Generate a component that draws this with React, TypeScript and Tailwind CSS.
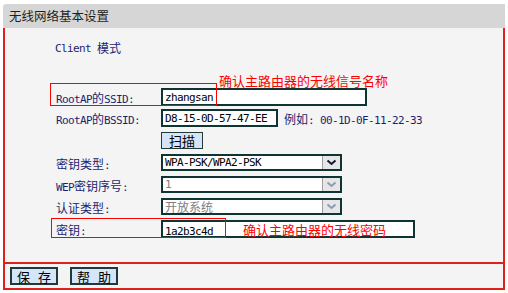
import { ReactNode } from 'react'

const cjkRe = /[\u3000-\u9fff\uff00-\uffef]/

// SimSun-style mix: latin runs in narrow mono, chinese runs in 12px
function Mix({ s }: { s: string }) {
  const parts = s.match(/[\u3000-\u9fff\uff00-\uffef]+|[^\u3000-\u9fff\uff00-\uffef]+/g) || []
  return (
    <>
      {parts.map((p, i) =>
        cjkRe.test(p) ? (
          <span key={i} className="font-['Noto_Sans_CJK_SC',sans-serif] text-[12px]">
            {p}
          </span>
        ) : (
          <span key={i} className="font-['DejaVu_Sans_Mono',monospace] text-[11px] tracking-[-0.62px] whitespace-pre">
            {p}
          </span>
        )
      )}
    </>
  )
}

function Row({ label, top, h = 'h-[18px]', children }: { label: string; top: string; h?: string; children?: ReactNode }) {
  return (
    <div className={`flex items-center ${top} ${h}`}>
      <div className="w-[156px] shrink-0 pl-[51px] text-[#1c1f6e] leading-none whitespace-nowrap">
        {label && <Mix s={label} />}
      </div>
      {children}
    </div>
  )
}

function Chevron({ disabled }: { disabled?: boolean }) {
  return (
    <div className="flex h-full w-[18px] shrink-0 items-center justify-center border-l border-[#a0a0a0] bg-[#e6e6e6]">
      <svg width="11" height="7" viewBox="0 0 11 7">
        <polyline
          points="1.5,1.5 5.5,5 9.5,1.5"
          fill="none"
          stroke={disabled ? '#8c9bb0' : '#111a33'}
          strokeWidth="2"
        />
      </svg>
    </div>
  )
}

function Select({ value, disabled }: { value: string; disabled?: boolean }) {
  return (
    <div className="flex h-full w-[181px] shrink-0 items-stretch border-2 border-[#0f3434] bg-white">
      <div className={`flex flex-1 items-center pl-[2px] leading-none ${disabled ? 'text-[#808080]' : 'text-black'}`}>
        <Mix s={value} />
      </div>
      <Chevron disabled={disabled} />
    </div>
  )
}

export default function App() {
  return (
    <div className="h-[293px] w-[508px] bg-white pt-[4px] pl-[3px]">
      <div className="w-[502px]">
        <div className="flex h-[24px] items-center rounded-tl-[3px] bg-[#d6d6d6] pl-[6px] font-['Noto_Sans_CJK_SC',sans-serif] text-[12.5px] text-[#1e1e1e]">
          无线网络基本设置
        </div>

        <div className="relative border-x-2 border-b-2 border-[#e0201c] bg-[#f4f4f4]">
          <div className="flex h-[234px] flex-col">
            <div className="mt-[13px] flex h-[14px] items-center pl-[50px] leading-none text-[#1c1f6e]">
              <Mix s="Client 模式" />
            </div>

            <div className="mt-[18px] flex h-[14px] items-center pl-[214px] font-['Noto_Sans_CJK_SC',sans-serif] text-[13px] leading-none text-[#ff0000]">
              确认主路由器的无线信号名称
            </div>

            <Row label="RootAP的SSID:" top="mt-[1px]">
              <div className="flex h-full w-[206px] shrink-0 items-center border-2 border-[#0f3434] bg-white pl-[2px] leading-none text-black">
                <Mix s="zhangsan" />
              </div>
            </Row>

            <Row label="RootAP的BSSID:" top="mt-[3px]">
              <div className="flex h-full w-[117px] shrink-0 items-center border-2 border-[#0f3434] bg-white pl-[2px] leading-none text-black">
                <Mix s="D8-15-0D-57-47-EE" />
              </div>
              <div className="ml-[6px] leading-none text-[#1c1f6e] whitespace-nowrap">
                <Mix s="例如: 00-1D-0F-11-22-33" />
              </div>
            </Row>

            <Row label="" top="mt-[5px]" h="h-[17px]">
              <div className="flex h-full w-[42px] shrink-0 items-center justify-center border border-[#1f3a3a] bg-[#d6e4f8] font-['Noto_Sans_CJK_SC',sans-serif] text-[13px] leading-none text-black">
                扫描
              </div>
            </Row>

            <Row label="密钥类型:" top="mt-[5px]" h="h-[17px]">
              <Select value="WPA-PSK/WPA2-PSK" />
            </Row>

            <Row label="WEP密钥序号:" top="mt-[5px]" h="h-[17px]">
              <Select value="1" disabled />
            </Row>

            <Row label="认证类型:" top="mt-[5px]" h="h-[17px]">
              <Select value="开放系统" disabled />
            </Row>

            <Row label="密钥:" top="mt-[5px]">
              <div className="flex h-full w-[254px] shrink-0 items-center border-2 border-[#0f3434] bg-white pl-[2px] leading-none">
                <div className="w-[78px] shrink-0 text-black">
                  <Mix s="1a2b3c4d" />
                </div>
                <span className="font-['Noto_Sans_CJK_SC',sans-serif] text-[13px] text-[#ff0000]">
                  确认主路由器的无线密码
                </span>
              </div>
            </Row>
          </div>

          {/* annotation boxes drawn over the rows */}
          <div className="absolute left-[45px] top-[55px] h-[23px] w-[167px] border border-[#ff0000]" />
          <div className="absolute left-[46px] top-[190px] h-[20px] w-[175px] border border-[#ff0000]" />

          <div className="flex h-[26px] gap-[12px] border-t-2 border-[#e0201c] pl-[5px] pt-[3px]">
            <button className="flex h-[18px] w-[48px] items-center justify-center gap-[8px] border-2 border-[#1f3a3a] bg-[#d6e6fa] font-['Noto_Sans_CJK_SC',sans-serif] text-[13px] leading-none text-black">
              <span>保</span>
              <span>存</span>
            </button>
            <button className="flex h-[18px] w-[48px] items-center justify-center gap-[8px] border-2 border-[#1f3a3a] bg-[#d6e6fa] font-['Noto_Sans_CJK_SC',sans-serif] text-[13px] leading-none text-black">
              <span>帮</span>
              <span>助</span>
            </button>
          </div>
        </div>
      </div>
    </div>
  )
}
